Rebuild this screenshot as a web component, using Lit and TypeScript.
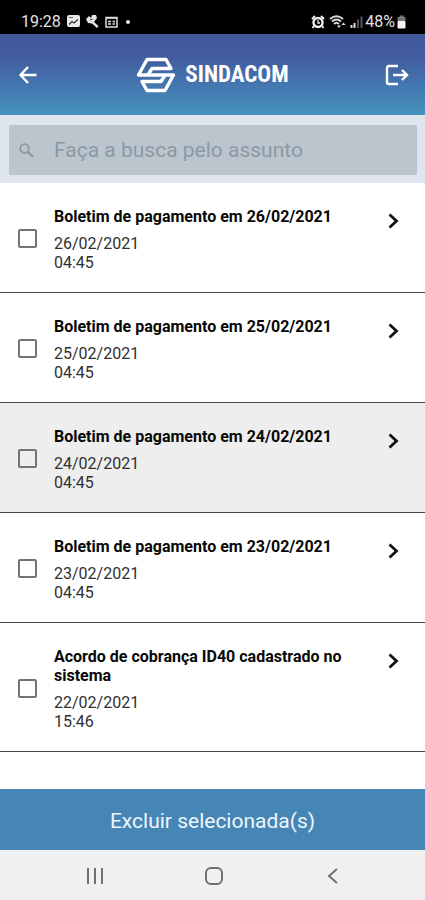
import { LitElement, html, css } from "lit";
import { customElement, property, state } from "lit/decorators.js";

interface Notice {
  title: string;
  date: string;
  time: string;
  active?: boolean;
}

@customElement("phone-status")
class PhoneStatus extends LitElement {
  static styles = css`
    :host {
      display: flex;
      align-items: center;
      justify-content: space-between;
      height: 34px;
      box-sizing: border-box;
      padding: 9px 19px 0 21px;
      background: #000;
      color: #e4e4e4;
      font-size: 16px;
      line-height: 20px;
    }
    .group {
      display: flex;
      align-items: center;
      gap: 6px;
    }
    .right {
      gap: 4px;
    }
    .dot {
      width: 4px;
      height: 4px;
      border-radius: 50%;
      background: #eee;
      margin-left: 2px;
    }
    .level {
      display: flex;
      align-items: center;
      gap: 2px;
    }
    svg {
      display: block;
    }
  `;
  render() {
    return html`
      <div class="group">
        <span>19:28</span>
        <svg width="13" height="13" viewBox="0 0 13 13">
          <rect x="0" y="0" width="13" height="12" rx="2" fill="#e8e8e8" />
          <path d="M2 9.500 L5 6.500 L7 8 L11 4.500" fill="none" stroke="#333" stroke-width="1.300" />
          <path d="M2 2.500 H6" fill="none" stroke="#666" />
        </svg>
        <svg width="13" height="13" viewBox="0 0 13 13">
          <path d="M0 4 L3 1 L5 3 L6 0 H10 L11 3 L8 7 L12.500 11 L11 13 L6 8.500 L2 8 Z" fill="#e4e4e4" />
          <path d="M4 5 L6.500 4" stroke="#222" />
        </svg>
        <svg width="13" height="12" viewBox="0 0 13 12">
          <rect x="1" y="1.500" width="11" height="9.500" fill="none" stroke="#ddd" stroke-width="1.500" />
          <path d="M1 2 H12 M3 5.500 H6 M3 8 H6 M7.500 5.500 H10 M7.500 8 H10" stroke="#ddd" stroke-width="1.600" />
        </svg>
        <span class="dot"></span>
      </div>
      <div class="group right">
        <svg width="14" height="14" viewBox="0 0 14 14">
          <circle cx="7" cy="7.500" r="4.500" fill="none" stroke="#eee" stroke-width="2.400" />
          <path d="M1 4 L4 1 M13 4 L10 1 M3 11 L1.500 13 M11 11 L12.500 13" stroke="#eee" stroke-width="2" />
          <path d="M7 5 V8 H9" stroke="#eee" stroke-width="1.300" fill="none" />
        </svg>
        <svg width="17" height="14" viewBox="0 0 17 14">
          <path d="M1 4 Q7.500 -1.500 14 4 M3 6.500 Q7.500 2.500 12 6.500 M5 9 Q7.500 6.500 10 9" fill="none" stroke="#d8d8d8" stroke-width="1.900" />
          <path d="M8 10.500 H12 L10 13 Z M12.500 10 L14.500 7.500 L16.500 10 Z" fill="#ddd" />
        </svg>
        <div class="level">
          <svg width="13" height="14" viewBox="0 0 13 14">
            <path d="M1.500 10 V13 M4.500 8 V13" stroke="#ddd" stroke-width="2" />
            <path d="M8 4.500 V13 M11.500 1.500 V13" stroke="#555" stroke-width="2" />
          </svg>
          <span>48%</span>
          <svg width="9" height="14" viewBox="0 0 9 14">
            <path d="M2.500 0.500 H6.500 V2 H8.500 V6 H0.500 V2 H2.500 Z" fill="#777" />
            <rect x="0.500" y="6" width="8" height="7.500" rx="1" fill="#f4f4f4" />
          </svg>
        </div>
      </div>
    `;
  }
}

@customElement("app-header")
class AppHeader extends LitElement {
  static styles = css`
    :host {
      display: flex;
      align-items: center;
      justify-content: space-between;
      height: 81px;
      box-sizing: border-box;
      padding: 0 14px;
      background: linear-gradient(#42589c, #425e9f 30%, #4470ac 55%, #4593be);
    }
    button {
      display: grid;
      place-items: center;
      width: 28px;
      height: 28px;
      padding: 0;
      border: 0;
      background: none;
      color: #fff;
    }
    .brand {
      display: flex;
      align-items: center;
      gap: 9px;
      color: #fff;
      font: bold 23px/32px "Roboto Condensed", "Liberation Sans Narrow", "Liberation Sans", sans-serif;
    }
    svg {
      display: block;
    }
  `;
  render() {
    return html`
      <button aria-label="Voltar">
        <svg width="20" height="20" viewBox="0 0 20 20" fill="none" stroke="currentColor" stroke-width="2.400">
          <path d="M18.500 10 H3 M10 2 L2.500 10 L10 18" />
        </svg>
      </button>
      <div class="brand">
        <svg width="40" height="36" viewBox="0 0 40 36" fill="none" stroke="currentColor" stroke-width="3.400" stroke-linejoin="round">
          <path d="M12.500 17 L16 11.500 H35 L30 2.500 H11 L2.500 18 H37.500 L29 33.500 H11 L6 24.500 H25 L28.500 19" />
        </svg>
        <span>SINDACOM</span>
      </div>
      <button aria-label="Sair">
        <svg width="24" height="22" viewBox="0 0 24 22" fill="none" stroke="currentColor" stroke-width="2.400">
          <path d="M13 2 H4 Q2 2 2 4 V18 Q2 20 4 20 H13" />
          <path d="M8 11 H22 M17 6 L22 11 L17 16" />
        </svg>
      </button>
    `;
  }
}

@customElement("notice-row")
class NoticeRow extends LitElement {
  @property({ attribute: false }) notice!: Notice;
  @property({ type: Number }) index = 0;

  static styles = css`
    :host {
      display: block;
    }
    .row {
      display: grid;
      grid-template-columns: 19px 1fr 20px;
      column-gap: 17px;
      align-items: center;
      padding: 24px 22px 20px 18px;
      border-bottom: 1px solid #484848;
      color: #303030;
      font-size: 16px;
      line-height: 19px;
    }
    .active {
      background: #eee;
    }
    input {
      appearance: none;
      width: 19px;
      height: 19px;
      margin: 0 0 2px;
      border: 2px solid #747474;
      border-radius: 2px;
    }
    input:checked {
      background: #4586b7;
    }
    label {
      display: block;
      margin-bottom: 8px;
      color: #080808;
      font-weight: 700;
    }
    .open {
      align-self: start;
      display: grid;
      place-items: center;
      width: 20px;
      height: 28px;
      padding: 0;
      border: 0;
      background: none;
      color: #111;
    }
  `;
  render() {
    const n = this.notice;
    const id = `notice-${this.index}`;
    return html`
      <div class="row ${n.active ? "active" : ""}">
        <input type="checkbox" id=${id} />
        <div class="text">
          <label for=${id}>${n.title}</label>
          <div>${n.date}</div>
          <div>${n.time}</div>
        </div>
        <button class="open" aria-label="Abrir ${n.title}">
          <svg width="12" height="16" viewBox="0 0 12 16" fill="none" stroke="currentColor" stroke-width="2.800">
            <path d="M2.500 1.500 L9.500 8 L2.500 14.500" />
          </svg>
        </button>
      </div>
    `;
  }
}

@customElement("app-root")
class AppRoot extends LitElement {
  @state() private notices: Notice[] = [
    { title: "Boletim de pagamento em 26/02/2021", date: "26/02/2021", time: "04:45" },
    { title: "Boletim de pagamento em 25/02/2021", date: "25/02/2021", time: "04:45" },
    { title: "Boletim de pagamento em 24/02/2021", date: "24/02/2021", time: "04:45", active: true },
    { title: "Boletim de pagamento em 23/02/2021", date: "23/02/2021", time: "04:45" },
    { title: "Acordo de cobrança ID40 cadastrado no sistema", date: "22/02/2021", time: "15:46" },
  ];

  static styles = css`
    :host {
      display: flex;
      flex-direction: column;
      min-height: 100vh;
      background: #fff;
      font-family: Roboto, "Liberation Sans", sans-serif;
    }
    .search {
      padding: 10px 8px 8px 9px;
      background: #dfe5ee;
    }
    .field {
      display: flex;
      align-items: center;
      gap: 20px;
      height: 50px;
      padding-left: 10px;
      border-radius: 2px;
      background: #bac5ce;
      color: #8d979f;
    }
    .field input {
      flex: 1;
      min-width: 0;
      height: 100%;
      padding: 0;
      border: 0;
      outline: 0;
      background: none;
      color: #303030;
      font: 21px Roboto, "Liberation Sans", sans-serif;
    }
    .field input::placeholder {
      color: #8d99a3;
      opacity: 1;
    }
    main {
      flex: 1;
    }
    .delete {
      height: 61px;
      padding: 2px 0 0;
      border: 0;
      background: #4586b7;
      color: #eef5fb;
      font: 21px Roboto, "Liberation Sans", sans-serif;
    }
    nav {
      display: flex;
      align-items: center;
      justify-content: space-between;
      height: 50px;
      padding: 2px 80px 0 83px;
      box-sizing: border-box;
      background: #f0f0f0;
    }
    nav button {
      display: grid;
      place-items: center;
      width: 24px;
      height: 24px;
      padding: 0;
      border: 0;
      background: none;
      color: #707070;
    }
  `;
  render() {
    return html`
      <phone-status></phone-status>
      <app-header></app-header>
      <div class="search">
        <div class="field">
          <svg width="15" height="15" viewBox="0 0 15 15" fill="none" stroke="currentColor" stroke-width="1.800">
            <circle cx="5.500" cy="5.500" r="4.300" />
            <path d="M8.700 8.700 L14 14" stroke-width="2.200" />
          </svg>
          <input type="text" placeholder="Faça a busca pelo assunto" aria-label="Faça a busca pelo assunto" />
        </div>
      </div>
      <main>
        ${this.notices.map((n, i) => html`<notice-row .notice=${n} .index=${i}></notice-row>`)}
      </main>
      <button class="delete">Excluir selecionada(s)</button>
      <nav aria-label="Sistema">
        <button aria-label="Recentes">
          <svg width="18" height="18" viewBox="0 0 18 18" stroke="currentColor" stroke-width="2">
            <path d="M2 1 V17 M9 1 V17 M16 1 V17" />
          </svg>
        </button>
        <button aria-label="Início">
          <svg width="18" height="18" viewBox="0 0 18 18" fill="none" stroke="currentColor" stroke-width="2">
            <rect x="1" y="1" width="16" height="16" rx="5" />
          </svg>
        </button>
        <button aria-label="Voltar">
          <svg width="12" height="18" viewBox="0 0 12 18" fill="none" stroke="currentColor" stroke-width="2">
            <path d="M10 2 L2 9 L10 16" />
          </svg>
        </button>
      </nav>
    `;
  }
}
